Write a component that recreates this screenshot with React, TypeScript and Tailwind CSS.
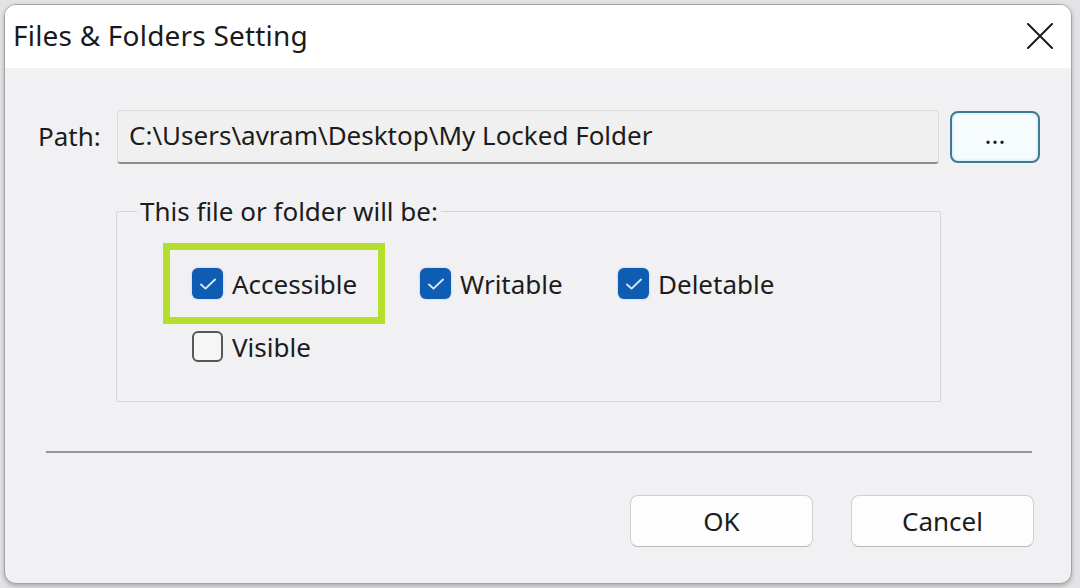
import React from "react";

const FONT = "font-['Noto_Sans','Open_Sans',sans-serif]";

function CheckBox({ checked }: { checked: boolean }) {
  if (checked) {
    return (
      <span className="flex h-[31px] w-[31px] shrink-0 items-center justify-center rounded-[6px] bg-[#0f5db2] shadow-[0_0_2px_rgba(90,160,230,0.6)]">
        <svg width="20" height="16" viewBox="0 0 20 16">
          <path
            d="M3 8.5 L7.5 12.6 L17 3.5"
            stroke="#d6e8ff"
            strokeWidth="1.9"
            fill="none"
            strokeLinecap="round"
            strokeLinejoin="round"
          />
        </svg>
      </span>
    );
  }
  return (
    <span className="h-[31px] w-[31px] shrink-0 rounded-[6px] border-[2px] border-[#575757] bg-[#f6f5f8]" />
  );
}

function Option({ label, checked }: { label: string; checked: boolean }) {
  return (
    <div className="flex items-center gap-[9px]">
      <CheckBox checked={checked} />
      <span className="text-[26px] leading-none text-[#1c1c1c]">{label}</span>
    </div>
  );
}

export default function App() {
  return (
    <div
      className={`${FONT} h-[588px] w-[1080px] overflow-hidden bg-[#e3e3e5] pl-[4px] pt-[4px]`}
    >
      <div className="flex h-[580px] w-[1068px] flex-col overflow-hidden rounded-[12px] border border-[#a3a3a6] bg-[#f1f0f3] shadow-[0_2px_4px_rgba(0,0,0,0.25)]">
        {/* title bar */}
        <div className="flex h-[63px] shrink-0 items-center justify-between bg-white pb-[3px] pl-[8px] pr-[17px]">
          <span className="text-[28px] leading-none tracking-[0.2px] text-[#1a1a1a]">
            Files &amp; Folders Setting
          </span>
          <svg width="28" height="26" viewBox="0 0 28 26" className="mt-[2px]">
            <path
              d="M2 1 L26 25 M26 1 L2 25"
              stroke="#1c1c1c"
              strokeWidth="2"
              strokeLinecap="round"
            />
          </svg>
        </div>

        {/* body */}
        <div className="flex flex-1 flex-col pl-[33px] pr-[26px] text-[#1c1c1c]">
          {/* path row */}
          <div className="mt-[42px] flex items-center">
            <span className="w-[79px] shrink-0 pb-[3px] text-[26px] leading-none">Path:</span>
            <div className="flex h-[54px] w-[822px] shrink-0 items-center rounded-[4px] border border-[#dadada] border-b-[2px] border-b-[#8e8e8e] bg-[#f0f0f0] pb-[4px] pl-[11px] text-[26px] leading-none">
              C:\Users\avram\Desktop\My Locked Folder
            </div>
            <button className="ml-[11px] flex h-[52px] w-[90px] shrink-0 items-center justify-center rounded-[8px] border-[2px] border-[#3c7c8e] bg-[#f6fbfe] pb-[6px] text-[26px] leading-none shadow-[inset_0_0_3px_rgba(150,210,240,0.7)]">
              ...
            </button>
          </div>

          {/* group box */}
          <fieldset className="ml-[78px] mt-[29px] h-[209px] w-[825px] rounded-[2px] border border-[#d6d6d9] pl-[46px]">
            <legend className="ml-[-26px] px-[3px] text-[26px] leading-[36px]">
              This file or folder will be:
            </legend>
            <div className="mt-[14px] flex items-center">
              <div className="flex h-[81px] w-[222px] items-center border-[7px] border-[#b4df2c] pl-[22px]">
                <Option label="Accessible" checked />
              </div>
              <div className="ml-[35px] w-[198px]">
                <Option label="Writable" checked />
              </div>
              <Option label="Deletable" checked />
            </div>
            <div className="mt-[7px] pl-[29px]">
              <Option label="Visible" checked={false} />
            </div>
          </fieldset>

          {/* separator */}
          <div className="ml-[8px] mt-[49px] h-[2px] w-[986px] bg-[#959597]" />

          {/* buttons */}
          <div className="mt-[42px] flex justify-end gap-[38px] pr-[11px]">
            <button className="flex h-[52px] w-[183px] items-center justify-center rounded-[8px] border border-[#d0d0d2] border-b-[#b8b8ba] bg-[#fdfdfd] text-[26px] leading-none">
              OK
            </button>
            <button className="flex h-[52px] w-[183px] items-center justify-center rounded-[8px] border border-[#d0d0d2] border-b-[#b8b8ba] bg-[#fdfdfd] text-[26px] leading-none">
              Cancel
            </button>
          </div>
        </div>
      </div>
    </div>
  );
}
